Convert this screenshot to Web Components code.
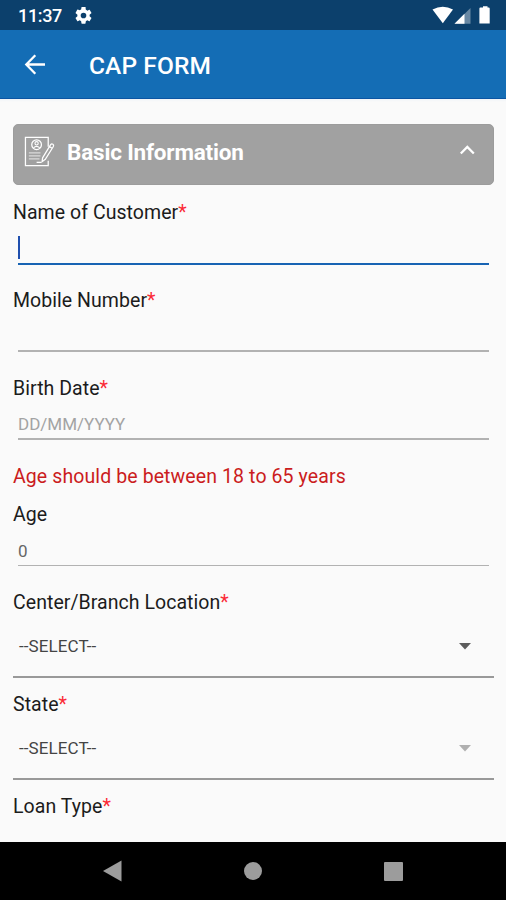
<!DOCTYPE html>
<html lang="en">
<head>
<meta charset="utf-8">
<title>CAP FORM</title>
<style>
  html, body { margin: 0; height: 100%; }
  body { font-family: Roboto, "Liberation Sans", sans-serif; background: #fafafa; overflow: hidden; }
</style>
</head>
<body>
<cap-screen>
  <status-bar slot="status" time="11:37"></status-bar>
  <app-bar slot="bar">CAP FORM</app-bar>
  <section-header>Basic Information</section-header>
  <text-field label="Name of Customer" required focused></text-field>
  <text-field label="Mobile Number" required></text-field>
  <text-field label="Birth Date" required placeholder="DD/MM/YYYY"></text-field>
  <form-note>Age should be between 18 to 65 years</form-note>
  <text-field label="Age" value="0" readonly></text-field>
  <select-field label="Center/Branch Location" required value="--SELECT--"></select-field>
  <select-field label="State" required value="--SELECT--" inactive></select-field>
  <select-field label="Loan Type" required value="--SELECT--"></select-field>
  <nav-bar slot="nav"></nav-bar>
</cap-screen>
<script>
function define(name, render) {
  customElements.define(name, class extends HTMLElement {
    constructor() { super(); this.attachShadow({ mode: 'open' }); }
    connectedCallback() { this.shadowRoot.innerHTML = render(this); }
  });
}

define('cap-screen', () => `
<style>
  :host { display: flex; flex-direction: column; width: 506px; height: 900px; background: #fafafa; }
  main { flex: 1; min-height: 0; overflow: hidden; padding: 25px 12px 0 13px; box-sizing: border-box;
         background: linear-gradient(#f0f4f8, #fafafa 3px); }
</style>
<slot name="status"></slot><slot name="bar"></slot><main><slot></slot></main><slot name="nav"></slot>`);

define('status-bar', el => `
<style>
  :host { display: flex; align-items: center; height: 30px; box-sizing: border-box; padding: 0 15px 0 18px;
          background: #0c406c; color: #fff; font-size: 18px; font-weight: 500; flex: none; }
  span { line-height: 30px; padding-top: 2px; width: 58px; letter-spacing: -.35px; }
  svg { display: block; }
  .gear { margin: 0 auto 0 -1px; }
</style>
<span>${el.getAttribute('time')}</span>
<svg class="gear" width="17" height="17" viewBox="2 2 20 20" fill="#fff"><path d="M19.14 12.94c.04-.3.06-.61.06-.94s-.02-.64-.07-.94l2.03-1.58a.49.49 0 0 0 .12-.61l-1.92-3.32a.49.49 0 0 0-.59-.22l-2.39.96c-.5-.38-1.03-.7-1.62-.94l-.36-2.54A.48.48 0 0 0 13.92 2h-3.84a.48.48 0 0 0-.48.41l-.36 2.54c-.59.24-1.13.57-1.62.94l-2.39-.96a.48.48 0 0 0-.59.22L2.74 8.87a.48.48 0 0 0 .12.61l2.03 1.58c-.05.3-.09.63-.09.94s.02.64.07.94l-2.03 1.58a.49.49 0 0 0-.12.61l1.92 3.32c.12.22.37.29.59.22l2.39-.96c.5.38 1.03.7 1.62.94l.36 2.54c.05.24.24.41.48.41h3.84c.24 0 .44-.17.47-.41l.36-2.54c.59-.24 1.13-.56 1.62-.94l2.39.96c.22.08.47 0 .59-.22l1.92-3.32a.48.48 0 0 0-.12-.61zM12 15.3a3.3 3.3 0 1 1 0-6.6 3.3 3.3 0 0 1 0 6.6z"/></svg>
<svg width="60" height="30" viewBox="0 0 60 30" fill="#fff">
  <path d="M1.500 9.500Q11.800 4 22 9.500L11.800 23.300z"/>
  <path d="M39.500 8v15.700H23.500z" opacity=".38"/><path d="M33.500 13.800v9.900H23.500z"/>
  <path d="M50 7.500h2V6.300h4.500v1.200h1.200q1 0 1 1V23.600H48.400V8.500q0-1 1-1z"/>
</svg>`);

define('app-bar', () => `
<style>
  :host { display: flex; align-items: center; height: 69px; box-sizing: border-box; flex: none; padding-left: 24px;
          background: #146db5; border-bottom: 1.500px solid #0b55a3; color: #fff; font-size: 24.500px; font-weight: 500; }
  svg { display: block; margin: 0 43px 1px 0; }
  span { padding-top: 2px; letter-spacing: .1px; white-space: nowrap; }
</style>
<svg width="22" height="22" viewBox="0 0 22 22" fill="none" stroke="#fff" stroke-width="2.300"><path d="M21 11.500H3M11.300 2.300L2.300 11.500l9 9.200"/></svg>
<span><slot></slot></span>`);

define('section-header', () => `
<style>
  :host { display: flex; align-items: center; height: 61px; box-sizing: border-box; margin: 0 0 16px; padding: 0 18px 6px 11px;
          background: #a1a1a1; border: 1px solid #9c9c9c; border-radius: 5px; color: #fff; font-size: 22.500px; font-weight: 700; }
  span { flex: 1; margin-left: 11px; white-space: nowrap; letter-spacing: -.18px; }
  svg { display: block; }
  .doc { margin: -1px 1px 0 -1px; }
  .chev { margin-top: -3px; }
</style>
<svg class="doc" width="31" height="31" viewBox="0 0 32 32" fill="none" stroke="#fff" stroke-width="1.300">
  <path d="M25 11V1.500H1.500v29H25v-5"/>
  <circle cx="13" cy="9" r="5"/><circle cx="13" cy="7.500" r="1.700" stroke-width="1.100"/><path d="M9.800 12.300q3.200-3.200 6.400 0" stroke-width="1.100"/>
  <path d="M5 17.500h12M5 20.500h12M5 23.500h11" stroke-width="1.300" opacity=".6"/><path d="M13 27.200h5"/>
  <path d="M19.200 22.500L27.500 9q1-1.300 2.300-.5 1.300.9.500 2.300L22 24l-3.300 2.500zM26.300 11l2.700 1.700"/>
</svg>
<span><slot></slot></span>
<svg class="chev" width="16" height="12" viewBox="0 0 16 12" fill="none" stroke="#fff" stroke-width="2.300"><path d="M1.800 9.500L8.300 3l6.500 6.500"/></svg>`);

const labelCss = `
  .label { height: 24px; line-height: 24px; font-size: 19.500px; color: #1c1c1c; white-space: nowrap; letter-spacing: .05px; }
  .label i { font-style: normal; color: #fb2a36; }`;
const label = el => `<div class="label">${el.getAttribute('label')}${el.hasAttribute('required') ? '<i>*</i>' : ''}</div>`;

define('text-field', el => `
<style>
  :host { display: block; height: 88px; }
  ${labelCss}
  .box { display: flex; align-items: center; height: 39px; box-sizing: border-box; margin: 0 5px; padding-top: 9px;
         border-bottom: 2px solid #b2b2b2; font-size: 17px; line-height: 22px; color: #666; }
  .hint { color: #a3a3a3; }
  :host([readonly]) .box { border-bottom: 1px solid #b2b2b2; }
  :host([focused]) .box { height: 40px; border-bottom: 2.500px solid #1763b3; padding-top: 0; }
  .caret { width: 2px; height: 23px; margin-top: 6px; background: #1f4fae; }
</style>
${label(el)}
<div class="box">${el.hasAttribute('focused') ? '<div class="caret"></div>'
  : el.hasAttribute('placeholder') ? `<span class="hint">${el.getAttribute('placeholder')}</span>`
  : `<span>${el.getAttribute('value') || ''}</span>`}</div>`);

define('form-note', () => `
<style>
  :host { display: block; height: 38px; line-height: 24px; font-size: 19.500px; color: #cb1c20; letter-spacing: .1px; white-space: nowrap; }
</style><slot></slot>`);

define('select-field', el => `
<style>
  :host { display: block; height: 102px; --arrow: #5c5c5c; }
  :host([inactive]) { --arrow: #b0b0b0; }
  ${labelCss}
  .box { display: flex; align-items: center; justify-content: space-between; height: 63px; box-sizing: border-box;
         border-bottom: 2px solid #999; padding: 1px 23px 0 6px; font-size: 17px; color: #444; }
  span { letter-spacing: .1px; }
  svg { display: block; }
</style>
${label(el)}
<div class="box"><span>${el.getAttribute('value')}</span>
<svg width="12" height="7" viewBox="0 0 12 7"><path d="M0 0h12L6 6.500z" fill="var(--arrow)"/></svg></div>`);

define('nav-bar', () => `
<style>
  :host { display: flex; align-items: center; justify-content: space-between; height: 58px; box-sizing: border-box; flex: none;
          padding: 0 103px; background: #000; }
  svg { display: block; }
</style>
<svg width="19" height="22" viewBox="0 0 19 22" fill="#9c9c9c"><path d="M0 11L18.500.5v21z"/></svg>
<svg width="18" height="18" viewBox="0 0 18 18" fill="#9c9c9c"><circle cx="9" cy="9" r="9"/></svg>
<svg width="19" height="19" viewBox="0 0 19 19" fill="#9c9c9c"><rect width="19" height="19" rx="1"/></svg>`);
</script>
</body>
</html>
